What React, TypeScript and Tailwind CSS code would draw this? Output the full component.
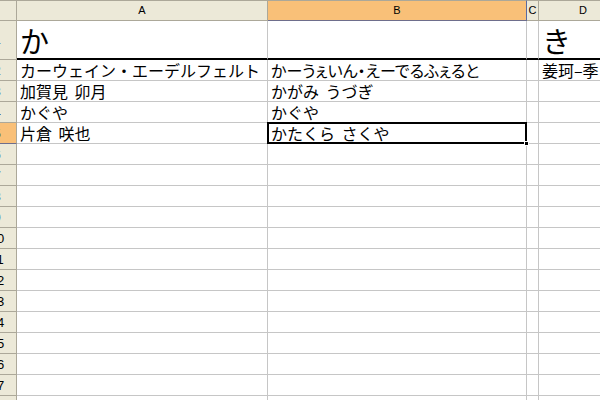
import React from "react";

const HDR_BORDER = "border-[#aca899]";

function ColHeader({ label, selected, last }: { label: string; selected?: boolean; last?: boolean }) {
  return (
    <div
      className={
        "h-[21px] border-t border-b border-r flex items-center justify-center text-[11px] leading-none font-['Liberation_Sans',Arial,sans-serif] text-black " +
        (selected ? "bg-[#f9c078] border-b-[#6e6e8c] border-r-[#5a6aa0] border-t-[#aca899]" : "bg-[#ece9d8] " + HDR_BORDER) +
        (last ? " border-r-0" : "")
      }
    >
      {label}
    </div>
  );
}

function RowHeader({ n, selected, h }: { n: number; selected?: boolean; h: string }) {
  return (
    <div
      className={
        h +
        " border-r border-b flex items-center justify-center text-[13px] leading-none font-['Liberation_Sans',Arial,sans-serif] text-black " +
        (selected ? "bg-[#f9c078] border-r-[#aca899] border-b-[#6e6e8c]" : "bg-[#ece9d8] " + HDR_BORDER)
      }
    >
      {n}
    </div>
  );
}

function Cell({ text, last, selected, palt }: { text?: string; last?: boolean; selected?: boolean; palt?: boolean }) {
  return (
    <div
      className={
        "relative h-[21px] border-b border-[#c6c6c6] flex items-end pl-[3px] pb-[1px] overflow-visible whitespace-nowrap text-[16px] leading-[18px] text-black [word-spacing:3px] " +
        (last ? "" : "border-r")
      }
    >
      {text && (
        <span className={"relative z-10 " + (palt ? "[font-feature-settings:'palt']" : "")}>{text}</span>
      )}
      {selected && (
        <>
          <div className="absolute left-[-1px] top-[-1px] right-[-1px] bottom-[-1px] border-2 border-black z-20 pointer-events-none" />
          <div className="absolute right-[-3px] bottom-[-3px] w-[5px] h-[5px] bg-black border border-white z-30" />
        </>
      )}
    </div>
  );
}

export default function App() {
  const rows: { n: number; a?: string; b?: string; d?: string }[] = [
    { n: 2, a: "カーウェイン・エーデルフェルト", b: "かーうぇいん・えーでるふぇると", d: "姜珂–季" },
    { n: 3, a: "加賀見 卯月", b: "かがみ うづぎ" },
    { n: 4, a: "かぐや", b: "かぐや" },
    { n: 5, a: "片倉 咲也", b: "かたくら さくや" },
  ];
  for (let i = 6; i <= 19; i++) rows.push({ n: i });

  return (
    <div className="w-[600px] h-[400px] overflow-hidden bg-white font-['Noto_Sans_CJK_JP','Noto_Sans',sans-serif]">
      <div className="ml-[-22px] grid grid-cols-[39px_251px_259px_12px_88px]">
        {/* header row */}
        <div className={"h-[21px] bg-[#ece9d8] border-t border-b border-r " + HDR_BORDER} />
        <ColHeader label="A" />
        <ColHeader label="B" selected />
        <ColHeader label="C" />
        <ColHeader label="D" last />

        {/* row 1 */}
        <div className={"h-[39px] bg-[#ece9d8] border-r border-b " + HDR_BORDER + " flex items-center justify-center text-[13px] font-['Liberation_Sans',Arial,sans-serif]"}>1</div>
        <div className="h-[39px] border-r border-[#c6c6c6] border-b-2 border-b-black flex items-end pl-[3px] pb-[1px] text-[29px] leading-[34px] text-black">か</div>
        <div className="h-[39px] border-r border-[#c6c6c6] border-b-2 border-b-black" />
        <div className="h-[39px] border-r border-[#c6c6c6] border-b-2 border-b-black" />
        <div className="h-[39px] border-b-2 border-b-black flex items-end pl-[3px] pb-[1px] text-[29px] leading-[34px] text-black">き</div>

        {rows.map((r) => (
          <React.Fragment key={r.n}>
            <RowHeader n={r.n} selected={r.n === 5} h="h-[21px]" />
            <Cell text={r.a} />
            <Cell text={r.b} selected={r.n === 5} palt={r.n === 2} />
            <Cell />
            <Cell text={r.d} last />
          </React.Fragment>
        ))}
      </div>
    </div>
  );
}
